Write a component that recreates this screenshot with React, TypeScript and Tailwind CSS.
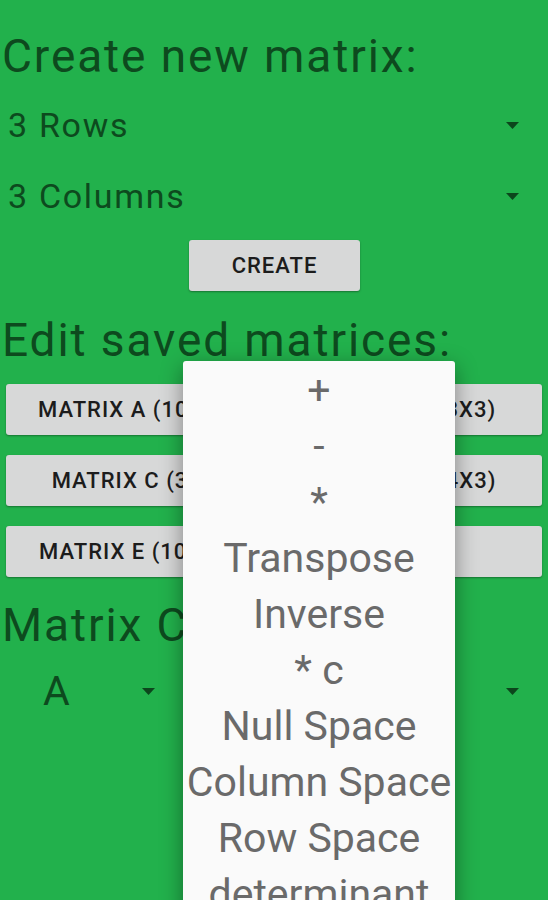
import React from 'react';

// ── Spinner caret ─────────────────────────────────────────────────────────────

function Caret() {
  return (
    <svg width="13" height="7" viewBox="0 0 13 7" aria-hidden="true" className="shrink-0">
      <path d="M0 0H13L6.5 7Z" fill="#0c461c" />
    </svg>
  );
}

const menuItems = [
  '+',
  '-',
  '*',
  'Transpose',
  'Inverse',
  '* c',
  'Null Space',
  'Column Space',
  'Row Space',
  'determinant',
];

const saved = [
  ['MATRIX A (10X10)', 'MATRIX B (3X3)'],
  ['MATRIX C (3X3)', 'MATRIX D (4X3)'],
  ['MATRIX E (10X10)', ''],
];

function GrayButton({ label, className = '' }: { label: string; className?: string }) {
  return (
    <div
      className={`flex items-center justify-center rounded-[3px] bg-[#d7d8d8] text-[22px] font-medium tracking-[1px] text-[#1c1c1c] shadow-[0_1px_2px_rgba(0,0,0,0.35)] ${className}`}
    >
      {label}
    </div>
  );
}

export default function App() {
  return (
    <div
      className="relative h-[900px] w-[548px] overflow-hidden bg-[#22b14c] text-[#0d4a1e]"
      style={{ fontFamily: 'Roboto, "Noto Sans", sans-serif' }}
    >
      {/* Create section */}
      <div className="mt-[29px] h-[54px] whitespace-nowrap pl-[2px] text-[46px] leading-[54px] tracking-[1.9px]">
        Create new matrix:
      </div>

      <div className="mt-[7px] flex h-[71px] items-center justify-between pl-[8px] pr-[29px]">
        <span className="text-[34px] leading-[71px] tracking-[1.7px]">3 Rows</span>
        <Caret />
      </div>
      <div className="flex h-[71px] items-center justify-between pl-[8px] pr-[29px]">
        <span className="text-[34px] leading-[71px] tracking-[1.7px]">3 Columns</span>
        <Caret />
      </div>

      <div className="mt-[8px] flex justify-center pl-[1px]">
        <GrayButton label="CREATE" className="h-[51px] w-[171px]" />
      </div>

      {/* Saved matrices */}
      <div className="mt-[22px] h-[54px] whitespace-nowrap pl-[2px] text-[46px] leading-[54px] tracking-[1.9px]">
        Edit saved matrices:
      </div>

      <div className="mt-[17px] flex flex-col gap-[20px] px-[6px]">
        {saved.map(([a, b]) => (
          <div key={a} className="flex gap-[6px]">
            <GrayButton label={a} className="h-[51px] flex-1" />
            <GrayButton label={b} className="h-[51px] flex-1" />
          </div>
        ))}
      </div>

      {/* Calculator */}
      <div className="mt-[21px] h-[54px] whitespace-nowrap pl-[2px] text-[46px] leading-[54px] tracking-[1.9px]">
        Matrix Calculations:
      </div>

      <div className="mt-[9px] flex h-[60px] items-center">
        <div className="flex w-[182px] items-center justify-between pl-[43px] pr-[27px]">
          <span className="text-[41px] leading-[60px]">A</span>
          <Caret />
        </div>
        <div className="flex w-[183px] items-center justify-between pl-[43px] pr-[27px]">
          <span className="text-[41px] leading-[60px]">+</span>
          <Caret />
        </div>
        <div className="flex w-[183px] items-center justify-between pl-[43px] pr-[29px]">
          <span className="text-[41px] leading-[60px]">B</span>
          <Caret />
        </div>
      </div>

      {/* Operation dropdown (open) */}
      <div className="absolute left-[183px] top-[361px] h-[560px] w-[272px] rounded-t-[3px] bg-[#fafafa] pt-[1px] shadow-[0_6px_22px_rgba(0,0,0,0.4)]">
        {menuItems.map((item) => (
          <div
            key={item}
            className="h-[56px] whitespace-nowrap text-center text-[41px] leading-[56px] text-[#6a6a6a]"
          >
            {item}
          </div>
        ))}
      </div>
    </div>
  );
}
